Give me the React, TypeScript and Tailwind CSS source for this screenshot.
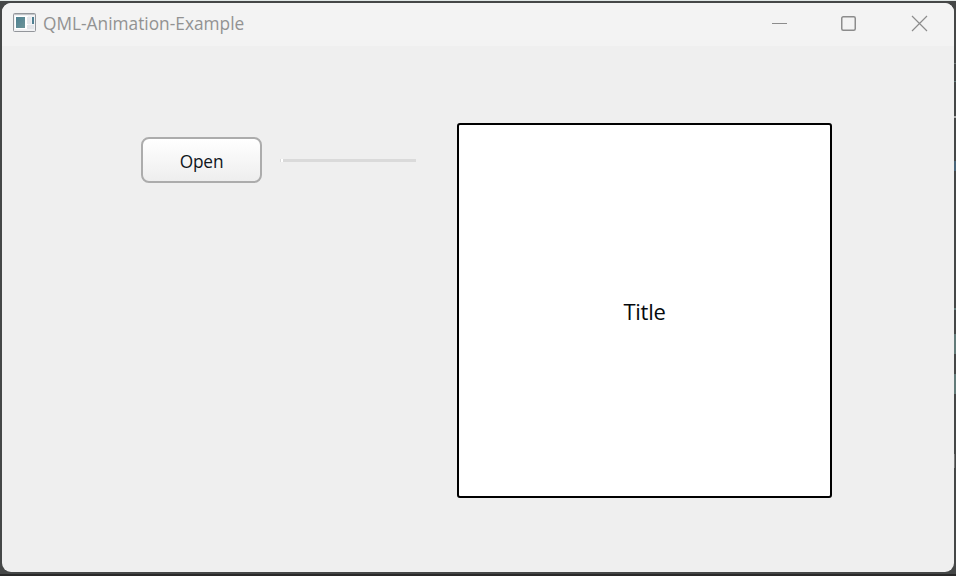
function AppIcon() {
  return (
    <svg width="24" height="20" viewBox="0 0 24 20">
      <defs>
        <linearGradient id="pane" x1="0" y1="0" x2="1" y2="1">
          <stop offset="0" stopColor="#4d8191" />
          <stop offset="1" stopColor="#6d9499" />
        </linearGradient>
      </defs>
      <rect x="0.5" y="0.5" width="22" height="18" rx="1" fill="#f1f2f4" stroke="#93969b" />
      <rect x="1" y="1" width="21" height="1" fill="#c3c5c8" />
      <rect x="2" y="3" width="13" height="13" fill="#fff" />
      <rect x="3" y="4" width="9" height="11" fill="url(#pane)" />
      <rect x="14" y="4" width="4" height="7" fill="#e6e8ec" />
      <rect x="14" y="12" width="7" height="4" fill="#e3e5e9" />
      <rect x="19" y="4" width="2" height="7" fill="#4f7f92" />
    </svg>
  );
}

function TitleBar() {
  return (
    <header className="flex h-[43px] shrink-0 items-start bg-[#f3f3f3] pl-[11px] pt-2.5">
      <AppIcon />
      <span className="ml-1.5 -mt-px w-[202px] whitespace-nowrap text-[17.3px] leading-6 tracking-[0.01px] text-[#929292]">
        QML-Animation-Example
      </span>
      <svg className="ml-auto mr-[26px] mt-[2px]" width="157" height="17" viewBox="0 0 157 17" fill="none" stroke="#8c8c8c">
        <path d="M1 8.5h15" />
        <rect x="70.75" y="1.75" width="13.5" height="13.5" rx="1.5" strokeWidth="1.5" />
        <path d="M141 1l15 15M156 1l-15 15" strokeWidth="1.2" />
      </svg>
    </header>
  );
}

function DesktopEdge() {
  return (
    <div className="flex w-0.5 shrink-0 flex-col">
      <div className="mt-[60px] h-px bg-[#6b7574]" />
      <div className="mt-[17px] h-px bg-[#637b79]" />
      <div className="mt-[34px] h-0.5 bg-[#aaaaaa]" />
      <div className="mt-[43px] h-2.5 bg-[#4a6579]" />
      <div className="mt-[137px] h-0.5 bg-[#637b79]" />
      <div className="mt-6 h-5 bg-[#637b79]" />
      <div className="mt-5 h-5 bg-[#637b79]" />
      <div className="mt-[60px] h-3.5 w-px bg-[#777777]" />
    </div>
  );
}

export default function App() {
  return (
    <div className="flex h-[576px] w-[956px] flex-col overflow-hidden border-b-2 border-t border-b-[#292929] border-t-[#e1e8e6] bg-[#454747] pb-0.5 pt-0.5 font-['Open_Sans','Noto_Sans',sans-serif]">
      <div className="flex min-h-0 flex-1 pl-0.5">
        <div className="flex w-[952px] flex-col overflow-hidden rounded-[9px] bg-[#efefef]">
          <TitleBar />
          <main className="flex items-start pl-[139px] pt-[77px]">
            <button className="mt-[14px] flex h-[46px] w-[121px] items-center justify-center rounded-lg border-2 border-[#acacac] bg-linear-to-b from-white to-[#eeeeee] pt-[3px] text-[17.3px] tracking-[-0.15px] text-[#10161c]">
              Open
            </button>
            <div className="ml-[18px] mt-9 flex h-[3px] w-[136px] bg-[#dadada] pl-px">
              <div className="w-0.5 bg-white" />
            </div>
            <section className="ml-[41px] flex h-[375px] w-[375px] items-center justify-center rounded-[3px] border-2 border-black bg-white text-[22px] text-[#05090d]">
              <span className="leading-8 tracking-[-0.3px]">Title</span>
            </section>
          </main>
        </div>
        <DesktopEdge />
      </div>
    </div>
  );
}
